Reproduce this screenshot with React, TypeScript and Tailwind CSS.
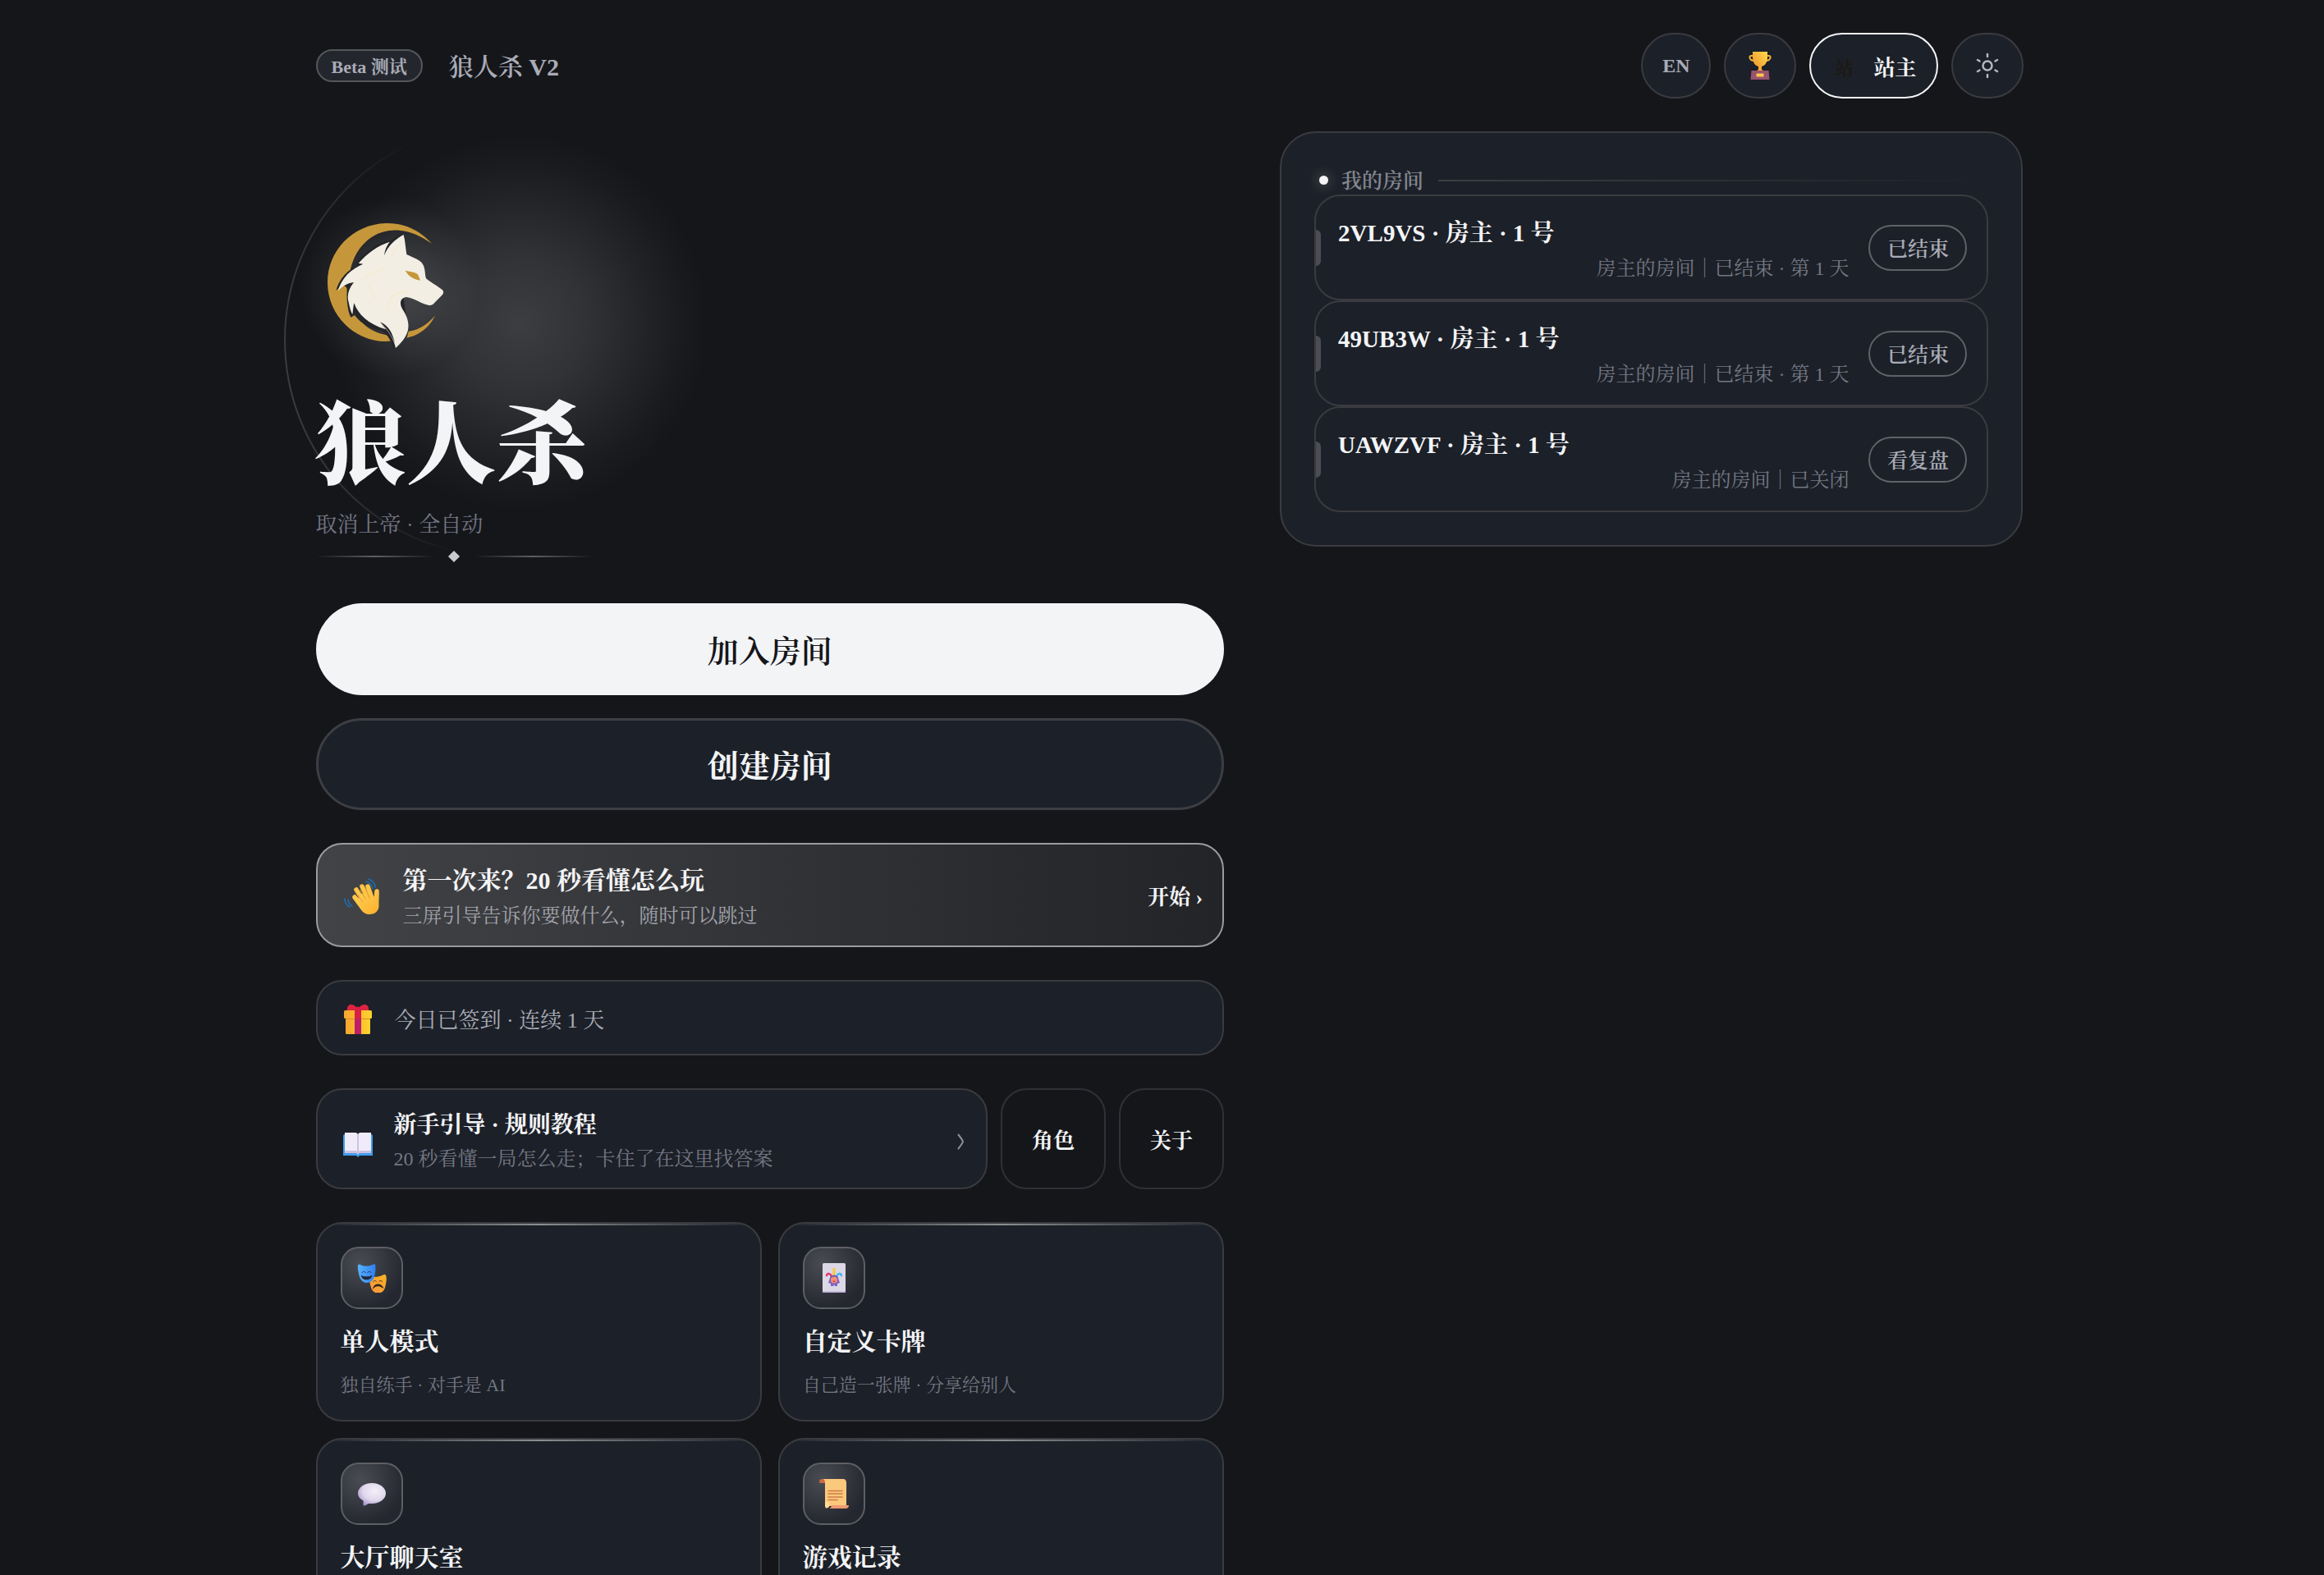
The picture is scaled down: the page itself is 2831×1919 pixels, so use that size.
import type { ReactNode } from 'react';

type Room = {
  code: string;
  seat: string;
  detail: string;
  action: string;
};

type Feature = {
  title: string;
  desc?: string;
  icon: ReactNode;
};

const rooms: Room[] = [
  { code: '2VL9VS', seat: '房主 · 1 号', detail: '房主的房间｜已结束 · 第 1 天', action: '已结束' },
  { code: '49UB3W', seat: '房主 · 1 号', detail: '房主的房间｜已结束 · 第 1 天', action: '已结束' },
  { code: 'UAWZVF', seat: '房主 · 1 号', detail: '房主的房间｜已关闭', action: '看复盘' },
];

const features: Feature[] = [
  { title: '单人模式', desc: '独自练手 · 对手是 AI', icon: <MasksIcon /> },
  { title: '自定义卡牌', desc: '自己造一张牌 · 分享给别人', icon: <JokerIcon /> },
  { title: '大厅聊天室', icon: <ChatIcon /> },
  { title: '游戏记录', icon: <ScrollIcon /> },
];

function WolfLogo() {
  return (
    <svg viewBox="-15 -18 528 528" className="relative size-[176px]" role="img" aria-label="狼人杀">
      <path
        fill="#c6973a"
        d="M408 105C362 52 302 28 240 30 118 34 26 132 27 248c1 118 98 213 212 214l26-2-8-20C150 430 90 340 108 215 122 120 190 58 265 56c54-2 100 18 143 49ZM420 367c-28 34-62 55-97 58l-6 24c48-10 84-40 103-82Z"
      />
      <path
        fill="#24262a"
        d="M300 64c-30 18-50 40-58 30-40 14-78 40-112 84l8 6c-36 18-66 44-80 92l24-20c8 4 14 6 16 14-2 40 2 80 14 104l14-8c26 34 60 50 100 56 24 20 34 40 44 66l50-80-20-140Z"
      />
      <path
        fill="#f2eee3"
        d="M305 72c-34 18-58 42-71 76 2-18 8-34 20-50-44 14-82 42-114 78l17 3c-44 18-78 50-92 98 18-18 36-29 58-31-20 24-26 50-19 72 4 20 8 34 14 46 2-16 3-30 6-42 14 40 52 78 116 96l-20-24c30 30 48 58 56 92 20-18 38-38 45-66 6-34-8-56-20-76-14-24-6-42 14-44 28 2 52 24 80 29 8 2 14 0 19-4l33-34c5-7 5-13-2-19-22-16-44-28-58-40-6-18 0-40-18-60-16-14-38-20-53-28-4-24-5-48-11-72Z"
      />
      <path fill="#24262a" d="M219 391c30 12 46 40 54 78-12-30-30-54-54-78Z" />
      <path fill="#c6973a" d="M311 203c20 4 44 6 48 18l7 18c-24-4-42-14-55-36Z" />
      <path
        fill="none"
        stroke="#f6e9cf"
        strokeWidth="4"
        strokeLinecap="round"
        d="M160 235c20-30 48-26 76-44M182 250c-6 30 10 40 22 54M250 352c-4-40 10-66 62-70M262 150c8-22 20-36 34-48"
      />
    </svg>
  );
}

function TrophyIcon() {
  return (
    <svg viewBox="0 0 28 34" className="h-[34px] w-[28px]" aria-hidden="true">
      <defs>
        <linearGradient id="cup" x1="0" y1="1" x2="1" y2="0">
          <stop offset="0" stopColor="#f08f2c" />
          <stop offset="1" stopColor="#ffd94a" />
        </linearGradient>
      </defs>
      <path fill="none" stroke="#f7b23a" strokeWidth="2" d="M6 5H3.500Q1 5 1.500 7.500 2.500 11 7 11M22 5h2.500Q27 5 26.500 7.500 25.500 11 21 11" />
      <path fill="url(#cup)" d="M5 0h18v7c0 6-3 10-7 11v3c0 1 2 2 3 3H9c1-1 3-2 3-3v-3C8 17 5 13 5 7Z" />
      <path fill="#99536e" d="M3.500 23h21l1 11h-23Z" />
      <rect x="9.500" y="26.500" width="9" height="4" rx="0.500" fill="#fbc84b" />
    </svg>
  );
}

function SunIcon() {
  return (
    <svg viewBox="0 0 32 32" className="size-8" fill="none" stroke="#b4b7c0" strokeWidth="2.5" strokeLinecap="round" aria-hidden="true">
      <circle cx="16" cy="16" r="5.500" />
      <path d="M16 5V2M16 30v-3M6.500 10.500 4 9M28 23l-2.500-1.500M25.500 10.500 28 9M4 23l2.500-1.500" />
    </svg>
  );
}

function WaveIcon() {
  return (
    <svg viewBox="0 -5 44 50" className="h-[50px] w-[44px]" aria-hidden="true">
      <defs>
        <linearGradient id="palm" x1="0" y1="0" x2="1" y2="1">
          <stop offset="0" stopColor="#ffd057" />
          <stop offset="1" stopColor="#fbb02c" />
        </linearGradient>
      </defs>
      <g fill="none" stroke="#fdc548" strokeWidth="5.500" strokeLinecap="round">
        <path d="M13 22 24 34M15 13l11 17M22 9l9 18M29 9l6 17M40 15l-1 14" />
      </g>
      <path fill="url(#palm)" d="M11 24c2-3 4-2 6 0l4-6 13 0 4 5 2-7c2 0 3 1 2.500 3V33c0 6-5 10-11 10-5 0-8-2-11-6Z" />
      <path fill="none" stroke="#e8952a" strokeWidth="1" strokeLinecap="round" d="M17 20l6 8M20 13l6 11M27 13l4 10" />
      <path
        fill="none"
        stroke="#1c6fb5"
        strokeWidth="1.500"
        strokeLinecap="round"
        d="M27 3c4 1 7 4 8 9M30 0c5 2 8 5 8 10M5 25c0 4 2 6 5 8M1 24c0 5 2 8 6 10"
      />
    </svg>
  );
}

function GiftIcon() {
  return (
    <svg viewBox="0 -4 34 40" className="h-[40px] w-[34px]" aria-hidden="true">
      <defs>
        <linearGradient id="box">
          <stop offset="0" stopColor="#f7a52f" />
          <stop offset="1" stopColor="#fdd32e" />
        </linearGradient>
      </defs>
      <path fill="#dc2440" d="M17 8H4c-1-5 2-9 6-8 3 .500 5 3 7 5 2-2 4-4.500 7-5 4-1 7 3 6 8Z" />
      <rect x="2" y="12" width="30" height="24" rx="1.500" fill="url(#box)" />
      <rect x="0" y="7" width="34" height="10" rx="1.500" fill="url(#box)" />
      <path fill="#d98a24" d="M2 17h30v1H2Z" />
      <path fill="#d91f45" d="M13 7c0-6 8-6 8 0v10h-8Z" />
      <path fill="#bf1f66" d="M13 17h8v19h-8Z" />
    </svg>
  );
}

function BookIcon() {
  return (
    <svg viewBox="0 -14 36 44" className="h-[44px] w-[36px]" aria-hidden="true">
      <path fill="#3f9df0" d="M0 4Q0 2 2 2h32q2 0 2 2v24H20l-2 2-2-2H0Z" />
      <path fill="#cfc0e0" d="M2 2h32v23H20l-2 2-2-2H2Z" />
      <path fill="#f0ebf8" d="M2 0h13q2 0 3 2 1-2 3-2h13v22H21q-2 0-3 2-1-2-3-2H2Z" />
      <path fill="none" stroke="#c6b4dc" strokeWidth="1.500" d="M18 2v22" />
    </svg>
  );
}

function MasksIcon() {
  return (
    <svg viewBox="75 90 108 110" className="size-[36px]" aria-hidden="true">
      <defs>
        <linearGradient id="mask-blue">
          <stop offset="0" stopColor="#58b4fb" />
          <stop offset="1" stopColor="#2e7ff0" />
        </linearGradient>
        <linearGradient id="mask-gold" x1="1" y1="0" x2="0" y2="1">
          <stop offset="0" stopColor="#f6b524" />
          <stop offset="1" stopColor="#fb9440" />
        </linearGradient>
      </defs>
      <path
        fill="url(#mask-gold)"
        d="M122 139c16 4 34 2 48-5 4-2 8-3 11 1 4 10 2 26-2 42-3 16-14 25-27 25-15 0-23-10-27-24-4-14-7-28-3-39Z"
      />
      <path
        fill="url(#mask-blue)"
        d="M77 97c6-6 10 0 16 2 14 3 26 2 38-3 4-3 9-4 11 1 2 12 0 26-3 40-3 16-16 26-30 26-13-1-23-11-27-26-3-14-7-28-5-40Z"
      />
      <g fill="none" stroke="#1f3a68" strokeWidth="3" strokeLinecap="round">
        <path d="M92 126c2-6 10-6 13-1M113 125c3-5 11-5 13 0" />
      </g>
      <path fill="#23283a" d="M88 134c12 8 30 8 43 0-3 12-11 18-22 18s-18-7-21-18Z" />
      <g fill="none" stroke="#5b3520" strokeWidth="3" strokeLinecap="round">
        <path d="M134 160c2-6 9-6 12-2M156 158c3-4 9-4 12 1" />
      </g>
      <path fill="#33231f" d="M132 188c2-14 10-20 20-20s18 6 21 17c-10-8-17-9-22-9-8 0-14 5-19 12Z" />
    </svg>
  );
}

function JokerIcon() {
  return (
    <svg viewBox="0 0 28 36" className="h-[36px] w-[28px]" aria-hidden="true">
      <rect width="28" height="36" rx="1.500" fill="#ddd8e6" />
      <path fill="#b6a9cf" d="M0 34.500h28q0 1.500-1.500 1.500h-25Q0 36 0 34.500Z" />
      <path fill="none" stroke="#e8336b" strokeWidth="2.500" strokeLinecap="round" d="M5 15c1-3 4-3 6 1" />
      <path fill="none" stroke="#3db6f2" strokeWidth="2.500" strokeLinecap="round" d="M23 15c-1-3-4-3-6 1" />
      <path fill="#f8c93a" d="M12.500 6h3v10h-3Z" />
      <path fill="#7e62c4" d="M9 18c2-4 8-4 10 0l2 6-3 1v3h-3l-1-2-1 2h-3v-3l-3-1Z" />
      <circle cx="14" cy="20.500" r="4" fill="#f38f72" />
      <path fill="#d8334f" d="M12 21.500h4l-2 2Z" />
      <path fill="#6a51b2" d="M9 18q5-4 10 0v-1q-5-5-10 0Z" />
    </svg>
  );
}

function ChatIcon() {
  return (
    <svg viewBox="0 -2 34 30" className="h-[30px] w-[34px]" aria-hidden="true">
      <defs>
        <radialGradient id="bubble" cx="0.600" cy="0.350" r="0.700">
          <stop offset="0" stopColor="#f3eff8" />
          <stop offset="0.600" stopColor="#e0d8ec" />
          <stop offset="1" stopColor="#a894cb" />
        </radialGradient>
      </defs>
      <path fill="url(#bubble)" d="M17 0c10 0 17 6 17 12.500S27 25 17 25h-4c-2 1-4 3-6 2.500-1-1 0-4-.5-6C2 19 0 16 0 12.500 0 6 7 0 17 0Z" />
    </svg>
  );
}

function ScrollIcon() {
  return (
    <svg viewBox="0 0 36 36" className="size-[36px]" aria-hidden="true">
      <path fill="#c96a45" d="M0 3q0-3 4-3h4v5H1Q0 5 0 3Z" />
      <path fill="#fbc97c" d="M5 0h24q4 0 4 5v28H12q-5 3-5-2V5Q7 1 5 0Z" />
      <path fill="#ffd995" d="M7 28h5v6q-5 4-5-2Z" />
      <path fill="#ee9a72" d="M15 32h21q0 4-4 4H12q3-1 3-4Z" />
      <path fill="none" stroke="#cf7c48" strokeWidth="1.500" strokeLinecap="round" d="M11 14.500h17M11 18h17M11 22h17M11 25.500h11" />
    </svg>
  );
}

function HeroArc() {
  return (
    <svg viewBox="0 0 528 528" className="absolute -left-[39px] -top-[10px] size-[528px]" fill="none" aria-hidden="true">
      <defs>
        <linearGradient id="arc" gradientUnits="userSpaceOnUse" x1="0" y1="270" x2="180" y2="250">
          <stop offset="0" stopColor="#fff" stopOpacity="0.160" />
          <stop offset="0.400" stopColor="#fff" stopOpacity="0.100" />
          <stop offset="1" stopColor="#fff" stopOpacity="0" />
        </linearGradient>
      </defs>
      <circle cx="264" cy="264" r="263" stroke="url(#arc)" strokeWidth="2" />
    </svg>
  );
}

function Header() {
  return (
    <header className="flex items-center justify-between py-10">
      <div className="flex items-center gap-8">
        <span className="flex h-10 items-center rounded-full border-2 border-[#55565a] bg-[#24262e] px-[17px] pt-[2px] text-[22px] font-bold text-[#a9acb6]">
          Beta 测试
        </span>
        <span className="pt-[2px] text-[30px] font-semibold text-[#a9acb6]">狼人杀 V2</span>
      </div>
      <div className="flex items-center gap-4">
        <button className="h-20 w-[85px] rounded-full border-2 border-[#3a3b40] bg-[#1c2028] text-[24px] font-bold text-[#a9acb6]">
          EN
        </button>
        <button aria-label="排行榜" className="flex h-20 w-[88px] items-center justify-center rounded-full border-2 border-[#3a3b40] bg-[#1c2028]">
          <TrophyIcon />
        </button>
        <button className="flex h-20 items-center gap-[14px] rounded-full border-2 border-[#f3f4f6] bg-[#1c2028] pt-1.5 pl-[18px] pr-6 font-bold">
          <span className="w-[44px] text-center text-[22px] text-[#1d1813]">站</span>
          <span className="text-[26px] text-[#f3f4f6]">站主</span>
        </button>
        <button aria-label="切换主题" className="flex h-20 w-[88px] items-center justify-center rounded-full border-2 border-[#3a3b40] bg-[#1c2028]">
          <SunIcon />
        </button>
      </div>
    </header>
  );
}

function Hero() {
  return (
    <section className="relative pt-24">
      {/* Moonlight behind the logo */}
      <div className="absolute left-[19px] top-[3px] size-[460px] bg-[radial-gradient(closest-side,rgba(255,255,255,0.17)_0%,rgba(255,255,255,0.12)_35%,rgba(255,255,255,0.05)_70%,rgba(255,255,255,0.02)_86%,transparent_100%)]" />
      <div className="absolute -left-[20px] top-[80px] size-[220px] bg-[radial-gradient(closest-side,rgba(255,255,255,0.12)_30%,rgba(255,255,255,0.05)_65%,transparent_100%)]" />
      <HeroArc />
      <WolfLogo />
      <h1 className="relative mt-14 text-[110px] leading-[112px] font-black text-[#f3f4f6]">狼人杀</h1>
      <p className="relative mt-5 text-[26px] leading-[40px] text-[#737783]">取消上帝 · 全自动</p>
      <div className="relative mt-[13px] flex w-[336px] items-center gap-5">
        <div className="h-[2px] flex-1 bg-linear-to-r from-transparent via-[#5d5f63] to-transparent" />
        <div className="size-[10px] rotate-45 bg-[#c9cacd]" />
        <div className="h-[2px] flex-1 bg-linear-to-r from-transparent via-[#5d5f63] to-transparent" />
      </div>
    </section>
  );
}

function FeatureCard({ feature }: { feature: Feature }) {
  return (
    <button className="relative flex min-h-[243px] flex-col items-start overflow-hidden rounded-[32px] border-2 border-[#3a3b40] bg-[#1c2028] p-7 text-left">
      <span className="absolute inset-x-0 top-0 h-[2px] bg-linear-to-r from-transparent via-[#8b8d90] to-transparent" />
      <span className="flex size-[76px] items-center justify-center rounded-[22px] border-2 border-[#5d5f65] bg-[radial-gradient(circle_at_30%_25%,#4a4c53_0%,#24272f_75%)]">
        {feature.icon}
      </span>
      <span className="mt-4 text-[30px] leading-[48px] font-bold text-[#f3f4f6]">{feature.title}</span>
      {feature.desc && <span className="mt-4 text-[22px] leading-[26px] text-[#737783]">{feature.desc}</span>}
    </button>
  );
}

function RoomRow({ room }: { room: Room }) {
  return (
    <li className="relative flex h-[129px] items-center gap-6 overflow-hidden rounded-[32px] border-2 border-[#3a3b40] pl-[27px] pr-6">
      <span className="absolute left-0 h-11 w-[6px] rounded-r-[6px] bg-[#4b4d52]" />
      <div className="flex min-w-0 flex-1 flex-col pt-1.5">
        <span className="text-[29px] leading-[44px] font-bold text-[#f3f4f6]">
          {room.code} · {room.seat}
        </span>
        <span className="text-right text-[24px] leading-[42px] text-[#737783]">{room.detail}</span>
      </div>
      <button className="h-14 w-[120px] rounded-full border-2 border-[#606268] pt-1 text-[25px] font-semibold text-[#a9acb6]">
        {room.action}
      </button>
    </li>
  );
}

export default function App() {
  return (
    <div
      lang="zh-CN"
      className="h-screen overflow-hidden bg-[#15161a] pl-[18px] font-['Liberation_Serif','Noto_Serif_CJK_SC','Noto_Sans_CJK_SC',serif] text-[#f3f4f6]"
    >
      <div className="mx-auto max-w-[2080px]">
        <Header />
        <main className="grid grid-cols-[1.1fr_0.9fr] items-start gap-[68px]">
          <div className="min-w-0">
            <Hero />

            <div className="mt-[52px] flex flex-col gap-7">
              <button className="h-28 rounded-full bg-[#f3f4f6] pt-1.5 text-[38px] font-semibold text-[#15161a]">加入房间</button>
              <button className="h-28 rounded-full border-[3px] border-[#3c3e43] bg-[#1c2028] pt-1.5 text-[38px] font-bold text-[#f3f4f6]">
                创建房间
              </button>
            </div>

            <button className="mt-10 flex h-[127px] w-full items-center gap-7 rounded-[32px] border-2 border-[#9a9b9d] bg-linear-to-r from-[#424346] to-[#232428] pl-8 pr-6 text-left">
              <WaveIcon />
              <span className="flex flex-1 flex-col pt-1.5">
                <span className="text-[30px] leading-[44px] font-bold">第一次来？20 秒看懂怎么玩</span>
                <span className="text-[24px] leading-[42px] text-[#a0a2aa]">三屏引导告诉你要做什么，随时可以跳过</span>
              </span>
              <span className="pt-1.5 text-[26px] font-bold">开始 ›</span>
            </button>

            <div className="mt-10 flex h-[92px] items-center gap-7 rounded-[32px] border-2 border-[#3a3b40] bg-[#1c2028] px-8">
              <GiftIcon />
              <span className="pt-1.5 text-[26px] text-[#a9acb6]">今日已签到 · 连续 1 天</span>
            </div>

            <div className="mt-10 grid grid-cols-[1fr_128px_128px] gap-4">
              <button className="flex h-[123px] items-center gap-[26px] rounded-[32px] border-2 border-[#3a3b40] bg-[#1c2028] pl-[31px] pr-[26px] text-left">
                <BookIcon />
                <span className="flex flex-1 flex-col pt-1.5">
                  <span className="text-[28px] leading-[42px] font-bold">新手引导 · 规则教程</span>
                  <span className="text-[24px] leading-[40px] text-[#737783]">20 秒看懂一局怎么走；卡住了在这里找答案</span>
                </span>
                <svg viewBox="0 -6 10 26" className="h-[26px] w-[10px]" fill="none" stroke="#8d909a" strokeWidth="2" aria-hidden="true">
                  <path d="M2 1Q7 7 8 10 7 13 2 19" />
                </svg>
              </button>
              <button className="rounded-[32px] border-2 border-[#303136] pt-1.5 text-[26px] font-bold">角色</button>
              <button className="rounded-[32px] border-2 border-[#303136] pt-1.5 text-[26px] font-bold">关于</button>
            </div>

            <div className="mt-10 grid grid-cols-2 gap-5">
              {features.map((feature) => (
                <FeatureCard key={feature.title} feature={feature} />
              ))}
            </div>
          </div>

          <aside className="rounded-[44px] border-2 border-[#3a3b40] bg-[#1c2028] p-10">
            <div className="flex items-center">
              <span className="ml-[6px] size-[11px] rounded-full bg-[#f3f4f6] shadow-[0_0_16px_rgba(255,255,255,0.4)]" />
              <h2 className="ml-4 pt-[3px] text-[25px] leading-[32px] font-semibold text-[#83868f]">我的房间</h2>
              <span className="ml-[18px] h-[2px] flex-1 bg-linear-to-r from-[#3c3e43] to-transparent" />
            </div>
            <ul>
              {rooms.map((room) => (
                <RoomRow key={room.code} room={room} />
              ))}
            </ul>
          </aside>
        </main>
      </div>
    </div>
  );
}
